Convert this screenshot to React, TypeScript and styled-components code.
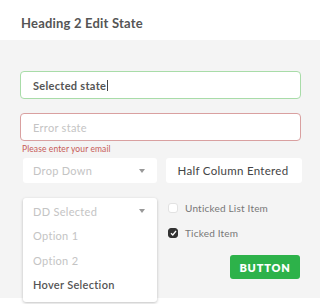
import React from 'react';
import styled, { createGlobalStyle } from 'styled-components';

const Global = createGlobalStyle`
	body {
		margin: 0;
		background: #fff;
		font-family: Lato, 'Open Sans', sans-serif;
	}
`;

const Page = styled.div`
	width: 320px;
	height: 304px;
	overflow: hidden;
`;

const Header = styled.div`
	height: 40px;
	display: flex;
	align-items: center;
	padding-left: 21px;
	padding-top: 5px;
	box-sizing: border-box;
	h2 {
		margin: 0;
		font-size: 13px;
		font-weight: 700;
		color: #555;
		letter-spacing: 0.2px;
	}
`;

const Panel = styled.div`
	height: 258px;
	background: #f4f4f4;
	padding: 31px 19px 0 20px;
	box-sizing: border-box;
`;

const Input = styled.div<{ $state?: 'ok' | 'error' }>`
	height: 28px;
	box-sizing: border-box;
	background: #fff;
	border-radius: 4px;
	border: 1.5px solid ${(p) => (p.$state === 'error' ? '#d9a0a0' : '#a8dca8')};
	display: flex;
	align-items: center;
	padding-left: 12px;
	font-size: 11px;
	font-weight: ${(p) => (p.$state === 'error' ? 400 : 700)};
	color: ${(p) => (p.$state === 'error' ? '#c4c4c4' : '#555')};
	letter-spacing: 0.3px;
	& + & {
		margin-top: 14px;
	}
`;

const Caret = styled.span`
	display: inline-block;
	width: 1px;
	height: 11px;
	background: #444;
	margin-left: 1px;
`;

const ErrorText = styled.div`
	padding: 3px 0 0 2px;
	height: 17px;
	box-sizing: border-box;
	font-size: 8.5px;
	line-height: 11px;
	color: #c75a57;
	letter-spacing: 0.1px;
`;

const Row = styled.div`
	display: grid;
	grid-template-columns: 134px 136px;
	column-gap: 9px;
	padding-left: 3px;
`;

const Field = styled.div<{ $filled?: boolean }>`
	height: 25px;
	background: #fff;
	border-radius: 3px;
	display: flex;
	align-items: center;
	justify-content: ${(p) => (p.$filled ? 'center' : 'space-between')};
	padding: 0 12px 0 10px;
	font-size: ${(p) => (p.$filled ? '11.5px' : '11px')};
	font-weight: 400;
	color: ${(p) => (p.$filled ? '#444' : '#c4c4c4')};
	letter-spacing: 0.3px;
`;

const Arrow = styled.span`
	width: 0;
	height: 0;
	border-left: 3.5px solid transparent;
	border-right: 3.5px solid transparent;
	border-top: 4px solid #999;
`;

const Bottom = styled(Row)`
	margin-top: 15px;
`;

const Menu = styled.div`
	height: 104px;
	background: #fff;
	border-radius: 3px;
	box-shadow: 0 1px 3px rgba(0, 0, 0, 0.25);
	padding-top: 1px;
	box-sizing: border-box;
`;

const Item = styled.div<{ $hover?: boolean }>`
	height: 24.5px;
	display: flex;
	align-items: center;
	justify-content: space-between;
	padding: 0 12px 0 10px;
	font-size: 11px;
	font-weight: ${(p) => (p.$hover ? 600 : 400)};
	color: ${(p) => (p.$hover ? '#555' : '#c4c4c4')};
	letter-spacing: 0.3px;
`;

const Side = styled.div`
	display: flex;
	flex-direction: column;
	margin-top: -3px;
`;

const Check = styled.label`
	height: 25px;
	flex-shrink: 0;
	display: flex;
	align-items: center;
	gap: 7px;
	padding-left: 2px;
	font-size: 10px;
	color: #777;
	letter-spacing: 0.2px;
`;

const Box = styled.span<{ $on?: boolean }>`
	width: 10px;
	height: 10px;
	border-radius: 3px;
	box-sizing: border-box;
	background: ${(p) => (p.$on ? '#333' : '#fff')};
	border: 1px solid ${(p) => (p.$on ? '#333' : '#e2e2e2')};
	display: flex;
	align-items: center;
	justify-content: center;
`;

const Button = styled.button`
	align-self: flex-end;
	flex-shrink: 0;
	margin-top: 10px;
	margin-right: 2px;
	width: 70px;
	height: 24px;
	border: none;
	border-radius: 3px;
	background: #2db24a;
	color: #fff;
	font-family: inherit;
	font-size: 11px;
	font-weight: 800;
	letter-spacing: 0.8px;
	padding: 0;
`;

export default function App() {
	return (
		<Page>
			<Global />
			<Header>
				<h2>Heading 2 Edit State</h2>
			</Header>
			<Panel>
				<Input $state="ok">
					Selected state
					<Caret />
				</Input>
				<Input $state="error">Error state</Input>
				<ErrorText>Please enter your email</ErrorText>
				<Row>
					<Field>
						Drop Down
						<Arrow />
					</Field>
					<Field $filled>Half Column Entered</Field>
				</Row>
				<Bottom>
					<Menu>
						<Item>
							DD Selected
							<Arrow />
						</Item>
						<Item>Option 1</Item>
						<Item>Option 2</Item>
						<Item $hover>Hover Selection</Item>
					</Menu>
					<Side>
						<Check>
							<Box />
							Unticked List Item
						</Check>
						<Check>
							<Box $on>
								<svg width="7" height="6" viewBox="0 0 7 6">
									<path d="M1 3.2 L2.8 5 L6 1" fill="none" stroke="#fff" strokeWidth="1.3" />
								</svg>
							</Box>
							Ticked Item
						</Check>
						<Button>BUTTON</Button>
					</Side>
				</Bottom>
			</Panel>
		</Page>
	);
}
